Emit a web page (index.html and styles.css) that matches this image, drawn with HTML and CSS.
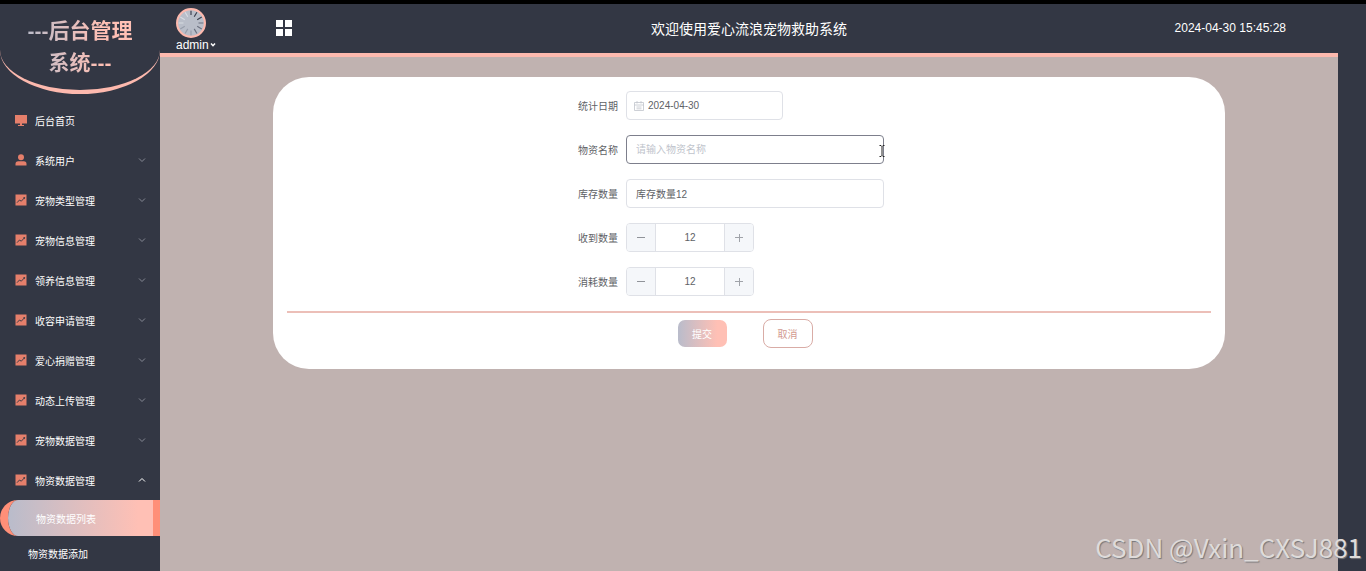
FILE: index.html
```html
<!DOCTYPE html>
<html lang="zh">
    <head>
        <meta charset="utf-8">
        <title>后台管理系统</title>
        <link rel="stylesheet" href="styles.css">
    </head>
    <body>
        <!-- shared icons -->
        <svg class="defs" width="0" height="0">
            <symbol id="chart" viewBox="0 0 12 12">
                <rect x="0.5" y="0.5" width="11" height="11" fill="#e57f6b"/>
                <path d="M2 8.7 L4.5 6 L6.3 7.2 L9.6 3.6" fill="none" stroke="#333744" stroke-width="0.9"/>
                <path d="M8 3.2 H10 V5.2 Z" fill="#333744"/>
            </symbol>
            <symbol id="down" viewBox="0 0 8 8">
                <path d="M1 2.5 L4 5.5 L7 2.5" fill="none" stroke="currentColor"/>
            </symbol>
        </svg>
        <div class="layout">
            <aside class="sidebar">
                <h1 class="logo"><span>---后台管理系统---</span></h1>
                <ul class="menu">
                    <li><a href="#">
                        <svg class="icon" viewBox="0 0 12 12"><path d="M0 1 H12 V9.5 H0 Z M5 9.5 H7 V11 H9 V12 H3 V11 H5 Z" fill="#e57f6b"/></svg>
                        后台首页</a></li>
                    <li><a href="#">
                        <svg class="icon" viewBox="0 0 12 12"><circle cx="6" cy="3.2" r="3" fill="#e57f6b"/><path d="M0.5 11.5 V10 Q0.5 7.3 3.2 7.3 H8.8 Q11.5 7.3 11.5 10 V11.5 Z" fill="#e57f6b"/></svg>
                        系统用户<svg class="arrow"><use href="#down"/></svg></a></li>
                    <li><a href="#"><svg class="icon"><use href="#chart"/></svg>宠物类型管理<svg class="arrow"><use href="#down"/></svg></a></li>
                    <li><a href="#"><svg class="icon"><use href="#chart"/></svg>宠物信息管理<svg class="arrow"><use href="#down"/></svg></a></li>
                    <li><a href="#"><svg class="icon"><use href="#chart"/></svg>领养信息管理<svg class="arrow"><use href="#down"/></svg></a></li>
                    <li><a href="#"><svg class="icon"><use href="#chart"/></svg>收容申请管理<svg class="arrow"><use href="#down"/></svg></a></li>
                    <li><a href="#"><svg class="icon"><use href="#chart"/></svg>爱心捐赠管理<svg class="arrow"><use href="#down"/></svg></a></li>
                    <li><a href="#"><svg class="icon"><use href="#chart"/></svg>动态上传管理<svg class="arrow"><use href="#down"/></svg></a></li>
                    <li><a href="#"><svg class="icon"><use href="#chart"/></svg>宠物数据管理<svg class="arrow"><use href="#down"/></svg></a></li>
                    <li class="open"><a href="#"><svg class="icon"><use href="#chart"/></svg>物资数据管理<svg class="arrow"><use href="#down"/></svg></a>
                        <ul class="submenu">
                            <li class="active"><a href="#">物资数据列表</a></li>
                            <li><a href="#">物资数据添加</a></li>
                        </ul>
                    </li>
                </ul>
            </aside>
            <div class="main">
                <header class="header">
                    <div class="left">
                        <button class="user" type="button">
                            <svg class="avatar" viewBox="0 0 28 28">
                                <circle cx="14" cy="14" r="13" fill="#b9bec9" stroke="#fdb9ae" stroke-width="2"/>
                                <g stroke-width="1.1">
                                    <path d="M14 2.5 V6.5 M17 8.2 L19.5 4 M19.8 11 L24 8.5" stroke="#3d4150"/>
                                    <path d="M21 14 H25.5 M19.8 17 L24 19.5 M17 19.5 L19.5 23.8" stroke="#6c7180"/>
                                    <path d="M14 21 V25.5 M11 19.5 L8.5 23.8 M8.2 17 L4 19.5" stroke="#989eab"/>
                                    <path d="M7 14 H2.5 M8.2 11 L4 8.5 M11 8.2 L8.5 4" stroke="#d8dbe2"/>
                                </g>
                            </svg>
                            <span>admin<svg class="caret" viewBox="0 0 6 6"><path d="M1 1.5 L3 3.7 L5 1.5" fill="none" stroke="#fff" stroke-width="1.5"/></svg></span>
                        </button>
                        <button class="grid" type="button" aria-label="菜单">
                            <svg viewBox="0 0 16 16"><path d="M0 0 H7 V7 H0 Z M9 0 H16 V7 H9 Z M0 9 H7 V16 H0 Z M9 9 H16 V16 H9 Z" fill="#fff"/></svg>
                        </button>
                    </div>
                    <div class="title">欢迎使用爱心流浪宠物救助系统</div>
                    <div class="time">2024-04-30 15:45:28</div>
                </header>
                <main class="content">
                    <form class="card">
                        <div class="fields">
                            <div class="row">
                                <label for="date">统计日期</label>
                                <div class="box date">
                                    <svg viewBox="0 0 10 10"><path d="M0.5 1.5 H9.5 V9.5 H0.5 Z M0.5 4 H9.5 M3 0 V2.5 M7 0 V2.5 M2.5 6 H7.5 M2.5 7.8 H7.5" fill="none" stroke="#c0c4cc" stroke-width="0.8"/></svg>
                                    <input type="text" id="date" value="2024-04-30">
                                </div>
                            </div>
                            <div class="row">
                                <label for="name">物资名称</label>
                                <div class="box focus">
                                    <input type="text" id="name" placeholder="请输入物资名称">
                                    <svg class="cursor" viewBox="0 0 6 12"><path d="M0.5 0.5 H2 L3 1.5 L4 0.5 H5.5 M3 1.5 V10.5 M0.5 11.5 H2 L3 10.5 L4 11.5 H5.5" fill="none" stroke="#222"/></svg>
                                </div>
                            </div>
                            <div class="row">
                                <label for="stock">库存数量</label>
                                <div class="box">
                                    <input type="text" id="stock" value="库存数量12">
                                </div>
                            </div>
                            <div class="row">
                                <label for="received">收到数量</label>
                                <div class="box number">
                                    <button type="button" aria-label="减少"><svg viewBox="0 0 8 8"><path d="M0 3.5 H8" stroke="#909399"/></svg></button>
                                    <input type="text" id="received" value="12">
                                    <button type="button" aria-label="增加"><svg viewBox="0 0 8 8"><path d="M0 3.5 H8 M4.5 0 V8" stroke="#a0a3a9"/></svg></button>
                                </div>
                            </div>
                            <div class="row">
                                <label for="used">消耗数量</label>
                                <div class="box number">
                                    <button type="button" aria-label="减少"><svg viewBox="0 0 8 8"><path d="M0 3.5 H8" stroke="#909399"/></svg></button>
                                    <input type="text" id="used" value="12">
                                    <button type="button" aria-label="增加"><svg viewBox="0 0 8 8"><path d="M0 3.5 H8 M4.5 0 V8" stroke="#a0a3a9"/></svg></button>
                                </div>
                            </div>
                        </div>
                        <div class="actions">
                            <button class="submit" type="button">提交</button>
                            <button class="cancel" type="button">取消</button>
                        </div>
                    </form>
                </main>
            </div>
        </div>
        <div class="watermark">CSDN @Vxin_CXSJ881</div>
    </body>
</html>
```
FILE: styles.css
```css
*{
    box-sizing: border-box;
}
body{
    margin: 0;
    background: #333744;
    border-top: 4px solid #000;
    font-family: "Liberation Sans", "Noto Sans CJK SC", sans-serif;
    font-size: 10px;
    height: 100vh;
    overflow: hidden;
}
ul{
    list-style-type: none;
    margin: 0;
    padding: 0;
}
a{
    color: #fff;
    text-decoration: none;
}
button, input{
    font-family: inherit;
    font-size: inherit;
    padding: 0;
    border: none;
    background: none;
}
svg{
    display: block;
    flex: none;
}
.defs{
    position: absolute;
}
.layout{
    display: flex;
    height: 100%;
}

/* sidebar */
.sidebar{
    width: 160px;
    flex: none;
}
.logo{
    margin: 0 0 6px;
    height: 90px;
    padding: 11px 24px 0;
    border-bottom: 4px solid #fdb9ae;
    border-radius: 0 0 80px 80px / 0 0 44px 44px;
    font-size: 21px;
    line-height: 32px;
    text-align: center;
}
.logo span{
    display: block;
    background: linear-gradient(90deg, #b9bccb, #ffc0b5 70%);
    -webkit-background-clip: text;
    background-clip: text;
    color: transparent;
    word-break: break-all;
}
.menu>li>a{
    display: flex;
    align-items: center;
    height: 40px;
    padding: 0 14px 0 15px;
}
.icon{
    width: 12px;
    height: 12px;
    margin-right: 8px;
}
.arrow{
    width: 8px;
    height: 8px;
    margin-left: auto;
    color: #868994;
}
.open .arrow{
    transform: rotate(180deg);
    color: #fff;
}
.submenu a{
    display: flex;
    align-items: center;
    height: 35px;
    padding-left: 28px;
}
.submenu .active a{
    height: 36px;
    background: linear-gradient(90deg, #b9bccb, #ffc0b5 90%) padding-box;
    border-left: 8px solid #ff8f78;
    border-right: 7px solid #ff8f78;
    border-radius: 18px 0 0 18px;
}

/* header */
.main{
    flex: 1;
    margin-right: 28px;
    display: flex;
    flex-direction: column;
}
.header{
    display: grid;
    grid-template-columns: 1fr auto 1fr;
    align-items: center;
    height: 53px;
    padding: 0 52px 4px 16px;
    border-bottom: 4px solid #fdb9ae;
    color: #fff;
}
.left{
    display: flex;
    align-items: center;
    gap: 60px;
}
.user{
    padding-top: 4px;
    color: #fff;
    font-size: 12px;
    line-height: 14px;
}
.user span{
    display: flex;
    align-items: center;
}
.avatar{
    width: 30px;
    height: 30px;
}
.caret{
    width: 6px;
    height: 6px;
    margin-left: 1px;
}
.grid svg{
    width: 16px;
    height: 16px;
}
.title{
    font-size: 14px;
    margin-left: 36px;
}
.time{
    font-size: 12px;
    text-align: right;
}

/* form */
.content{
    flex: 1;
    background: #c0b2b0;
    padding: 20px 113px;
}
.card{
    background: #fff;
    border-radius: 36px;
    padding: 14px 14px 21px;
}
.fields{
    width: 342px;
    margin: 0 auto;
    display: flex;
    flex-direction: column;
    gap: 15px;
    padding-bottom: 15px;
}
.row{
    display: flex;
    align-items: center;
    gap: 8px;
    color: #606266;
}
.row label{
    width: 40px;
}
.box{
    position: relative;
    display: flex;
    align-items: center;
    width: 258px;
    height: 29px;
    padding: 0 9px;
    border: 1px solid #dfe1e7;
    border-radius: 4px;
}
.box input{
    flex: 1;
    min-width: 0;
    height: 100%;
    color: #606266;
    outline: none;
}
.box input::placeholder{
    color: #c0c4cc;
}
.date{
    width: 157px;
    gap: 4px;
    padding: 0 7px;
}
.date svg{
    width: 10px;
    height: 10px;
}
.focus{
    border-color: #7d7f8c;
}
.cursor{
    position: absolute;
    right: -2px;
    top: 9px;
    width: 6px;
    height: 12px;
}
.number{
    width: 128px;
    padding: 0;
    overflow: hidden;
}
.number input{
    text-align: center;
    border: solid #dfe1e7;
    border-width: 0 1px;
}
.number button{
    width: 28px;
    height: 100%;
    background: #f5f7fa;
}
.number svg{
    width: 8px;
    height: 8px;
    margin: 0 auto;
}
.actions{
    display: flex;
    justify-content: center;
    align-items: center;
    gap: 36px;
    padding: 6px 8px 0 0;
    border-top: 2px solid #ecbfb8;
}
.submit{
    width: 49px;
    height: 27px;
    border-radius: 7px;
    background: linear-gradient(90deg, #b9bccb, #ffc0b5 80%);
    color: #fff;
}
.cancel{
    width: 50px;
    height: 29px;
    border: 1px solid #d9aca6;
    border-radius: 8px;
    color: #d39a90;
}
.watermark{
    position: absolute;
    right: 4px;
    bottom: 6px;
    font-family: "Noto Sans CJK SC", sans-serif;
    font-size: 26px;
    line-height: 36px;
    color: #dedbda;
    text-shadow: 1px 1px 1px #77777a;
}
```
